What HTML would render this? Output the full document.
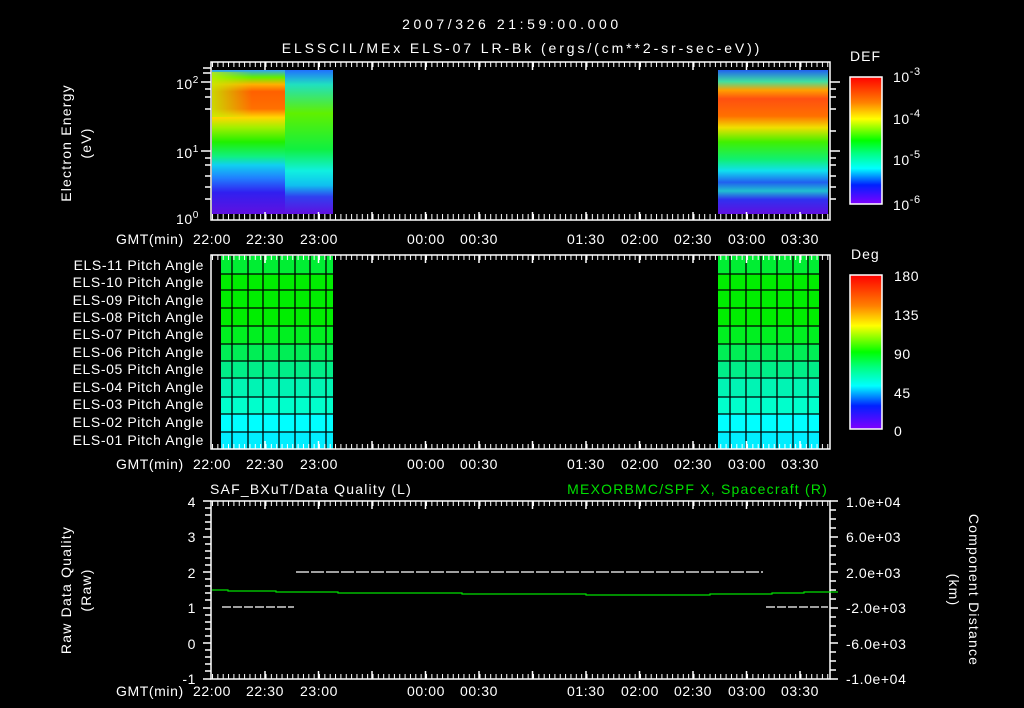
<!DOCTYPE html>
<html><head><meta charset="utf-8"><style>
html,body{margin:0;padding:0;background:#000;width:1024px;height:708px;overflow:hidden}
svg{display:block}
text{font-family:"Liberation Sans",sans-serif;fill:#fff;font-size:14px;letter-spacing:0.6px}
</style></head><body>
<svg width="1024" height="708" viewBox="0 0 1024 708" xmlns="http://www.w3.org/2000/svg">
<defs>
<pattern id="tkT" x="212" y="0" width="5.35" height="708" patternUnits="userSpaceOnUse"><rect x="0" y="0" width="1" height="708" fill="#fff"/></pattern>
<linearGradient id="specL" x1="0" y1="0" x2="0" y2="1">
<stop offset="0" stop-color="#30a0ff"/><stop offset="0.05" stop-color="#60f000"/>
<stop offset="0.1" stop-color="#ffb000"/><stop offset="0.15" stop-color="#ff6000"/><stop offset="0.27" stop-color="#ff7000"/>
<stop offset="0.33" stop-color="#ffd800"/><stop offset="0.4" stop-color="#a0f000"/><stop offset="0.5" stop-color="#20f000"/>
<stop offset="0.6" stop-color="#10f080"/><stop offset="0.66" stop-color="#10d0f0"/><stop offset="0.75" stop-color="#2080ff"/>
<stop offset="0.85" stop-color="#3020f0"/><stop offset="1" stop-color="#6010e0"/></linearGradient>
<linearGradient id="specM" x1="0" y1="0" x2="0" y2="1">
<stop offset="0" stop-color="#2070ff"/><stop offset="0.1" stop-color="#20e0c0"/>
<stop offset="0.3" stop-color="#60f000"/><stop offset="0.55" stop-color="#10f040"/><stop offset="0.7" stop-color="#10f0e0"/>
<stop offset="0.8" stop-color="#10c0f0"/><stop offset="0.88" stop-color="#3040f0"/><stop offset="1" stop-color="#6010e0"/></linearGradient>
<linearGradient id="specR" x1="0" y1="0" x2="0" y2="1">
<stop offset="0" stop-color="#2060f0"/><stop offset="0.08" stop-color="#40e0a0"/>
<stop offset="0.14" stop-color="#ffa000"/><stop offset="0.2" stop-color="#ff5010"/><stop offset="0.32" stop-color="#ff7000"/>
<stop offset="0.4" stop-color="#f0e000"/><stop offset="0.5" stop-color="#40f000"/><stop offset="0.62" stop-color="#10f070"/>
<stop offset="0.7" stop-color="#10e0f0"/><stop offset="0.78" stop-color="#2060f0"/><stop offset="0.84" stop-color="#20c0d0"/>
<stop offset="0.9" stop-color="#3030f0"/><stop offset="1" stop-color="#6010e0"/></linearGradient>
<linearGradient id="fadeL" x1="0" y1="0" x2="1" y2="0">
<stop offset="0" stop-color="#c0f000" stop-opacity="0.8"/><stop offset="1" stop-color="#c0f000" stop-opacity="0"/></linearGradient>
<linearGradient id="cbar" x1="0" y1="0" x2="0" y2="1">
<stop offset="0" stop-color="#ff0000"/><stop offset="0.2" stop-color="#ff8000"/><stop offset="0.33" stop-color="#ffff00"/>
<stop offset="0.5" stop-color="#00ff00"/><stop offset="0.6" stop-color="#00ff80"/><stop offset="0.72" stop-color="#00ffff"/>
<stop offset="0.85" stop-color="#0020ff"/><stop offset="1" stop-color="#8000ff"/></linearGradient>
</defs>

<text x="512" y="29" text-anchor="middle" font-size="18" style="letter-spacing:3.6px">2007/326 21:59:00.000</text>
<text x="522" y="53" text-anchor="middle" font-size="17" style="letter-spacing:2.9px">ELSSCIL/MEx ELS-07 LR-Bk  (ergs/(cm**2-sr-sec-eV))</text>

<!-- Panel 1 -->
<rect x="212" y="70" width="73" height="144" fill="url(#specL)"/>
<rect x="212" y="72" width="40" height="45" fill="url(#fadeL)"/>
<rect x="285" y="70" width="48" height="144" fill="url(#specM)"/>
<rect x="718" y="70" width="110" height="144" fill="url(#specR)"/>
<rect x="211" y="62" width="619" height="158" fill="none" stroke="#fff" stroke-width="1.5"/>
<rect x="212" y="62" width="618" height="5" fill="url(#tkT)"/>
<rect x="212" y="214" width="618" height="6" fill="url(#tkT)"/>
<g stroke="#fff" stroke-width="1.5">
<path d="M265 62v8M318.5 62v8M372 62v8M425.5 62v8M479 62v8M532.5 62v8M586 62v8M639.5 62v8M693 62v8M746.5 62v8M800 62v8"/>
<path d="M265 220v-8M318.5 220v-8M372 220v-8M425.5 220v-8M479 220v-8M532.5 220v-8M586 220v-8M639.5 220v-8M693 220v-8M746.5 220v-8M800 220v-8"/>
<path d="M201 82h10M205 89h6M205 97h6M205 109h6M201 151h10M205 158h6M205 165h6M205 176h6M205 187h6M205 199h6M203 68h8M203 73h8"/>
<path d="M830 82h10M830 89h6M830 97h6M830 109h6M830 131h6M830 151h10M830 158h6M830 165h6M830 176h6M830 187h6M830 199h6"/>
</g>
<text x="176" y="89" font-size="15">10<tspan dy="-6" font-size="10">2</tspan></text>
<text x="176" y="158" font-size="15">10<tspan dy="-6" font-size="10">1</tspan></text>
<text x="176" y="224" font-size="15">10<tspan dy="-6" font-size="10">0</tspan></text>
<text transform="translate(71 143) rotate(-90)" text-anchor="middle" font-size="16" style="letter-spacing:1.2px">Electron Energy</text>
<text transform="translate(91 143) rotate(-90)" text-anchor="middle" font-size="16" style="letter-spacing:1.2px">(eV)</text>
<rect x="850" y="77" width="32" height="127" fill="url(#cbar)" stroke="#fff" stroke-width="1.5"/>
<text x="850" y="61" font-size="17" style="letter-spacing:1px">DEF</text>
<text x="893" y="82" font-size="17">10<tspan dy="-7" font-size="11">-3</tspan></text>
<text x="893" y="124" font-size="17">10<tspan dy="-7" font-size="11">-4</tspan></text>
<text x="893" y="165" font-size="17">10<tspan dy="-7" font-size="11">-5</tspan></text>
<text x="893" y="210" font-size="17">10<tspan dy="-7" font-size="11">-6</tspan></text>

<g id="tl" font-size="15" style="letter-spacing:1px">
<text x="116" y="244">GMT(min)</text>
<text x="212" y="244" text-anchor="middle">22:00</text>
<text x="265" y="244" text-anchor="middle">22:30</text>
<text x="319" y="244" text-anchor="middle">23:00</text>
<text x="426" y="244" text-anchor="middle">00:00</text>
<text x="479" y="244" text-anchor="middle">00:30</text>
<text x="586" y="244" text-anchor="middle">01:30</text>
<text x="640" y="244" text-anchor="middle">02:00</text>
<text x="693" y="244" text-anchor="middle">02:30</text>
<text x="747" y="244" text-anchor="middle">03:00</text>
<text x="800" y="244" text-anchor="middle">03:30</text>
</g>
<use href="#tl" y="225"/>
<use href="#tl" y="452"/>

<!-- Panel 2 -->
<g>
<rect x="221" y="256" width="112" height="18" fill="#00ee33"/><rect x="718" y="256" width="101" height="18" fill="#00ee33"/>
<rect x="221" y="274" width="112" height="52" fill="#00ee00"/><rect x="718" y="274" width="101" height="52" fill="#00ee00"/>
<rect x="221" y="326" width="112" height="18" fill="#00f020"/><rect x="718" y="326" width="101" height="18" fill="#00f020"/>
<rect x="221" y="344" width="112" height="17" fill="#00ee55"/><rect x="718" y="344" width="101" height="17" fill="#00ee55"/>
<rect x="221" y="361" width="112" height="17" fill="#00ee88"/><rect x="718" y="361" width="101" height="17" fill="#00ee88"/>
<rect x="221" y="378" width="112" height="19" fill="#00f4b4"/><rect x="718" y="378" width="101" height="19" fill="#00f4b4"/>
<rect x="221" y="397" width="112" height="17" fill="#00ffcc"/><rect x="718" y="397" width="101" height="17" fill="#00ffcc"/>
<rect x="221" y="414" width="112" height="18" fill="#00ffff"/><rect x="718" y="414" width="101" height="18" fill="#00ffff"/>
<rect x="221" y="432" width="112" height="17" fill="#00eeff"/><rect x="718" y="432" width="101" height="17" fill="#00eeff"/>
</g>
<g stroke="#000" stroke-width="1.3">
<path d="M221 274h112M221 290h112M221 308h112M221 326h112M221 344h112M221 361h112M221 378h112M221 397h112M221 414h112M221 432h112"/>
<path d="M718 274h101M718 290h101M718 308h101M718 326h101M718 344h101M718 361h101M718 378h101M718 397h101M718 414h101M718 432h101"/>
<path d="M232 256v193M248 256v193M263 256v193M279 256v193M295 256v193M310 256v193M326 256v193"/>
<path d="M730 256v193M746 256v193M761 256v193M777 256v193M793 256v193M808 256v193"/>
</g>
<rect x="211" y="255" width="619" height="194" fill="none" stroke="#fff" stroke-width="1.5"/>
<rect x="212" y="255" width="618" height="5" fill="url(#tkT)"/>
<rect x="212" y="444" width="618" height="5" fill="url(#tkT)"/>
<g stroke="#fff" stroke-width="1.5">
<path d="M265 255v8M318.5 255v8M372 255v8M425.5 255v8M479 255v8M532.5 255v8M586 255v8M639.5 255v8M693 255v8M746.5 255v8M800 255v8"/>
<path d="M265 449v-8M318.5 449v-8M372 449v-8M425.5 449v-8M479 449v-8M532.5 449v-8M586 449v-8M639.5 449v-8M693 449v-8M746.5 449v-8M800 449v-8"/>
</g>
<g text-anchor="end" font-size="14" style="letter-spacing:1.4px">
<text x="204" y="270">ELS-11 Pitch Angle</text>
<text x="204" y="287">ELS-10 Pitch Angle</text>
<text x="204" y="305">ELS-09 Pitch Angle</text>
<text x="204" y="322">ELS-08 Pitch Angle</text>
<text x="204" y="339">ELS-07 Pitch Angle</text>
<text x="204" y="357">ELS-06 Pitch Angle</text>
<text x="204" y="374">ELS-05 Pitch Angle</text>
<text x="204" y="392">ELS-04 Pitch Angle</text>
<text x="204" y="409">ELS-03 Pitch Angle</text>
<text x="204" y="427">ELS-02 Pitch Angle</text>
<text x="204" y="445">ELS-01 Pitch Angle</text>
</g>
<rect x="850" y="275" width="32" height="154" fill="url(#cbar)" stroke="#fff" stroke-width="1.5"/>
<text x="851" y="259" font-size="17" style="letter-spacing:1px">Deg</text>
<text x="894" y="281" font-size="17">180</text>
<text x="894" y="320" font-size="17">135</text>
<text x="894" y="359" font-size="17">90</text>
<text x="894" y="398" font-size="17">45</text>
<text x="894" y="436" font-size="17">0</text>

<!-- Panel 3 -->
<text x="210" y="494" font-size="16" style="letter-spacing:1.2px">SAF_BXuT/Data Quality (L)</text>
<text x="828" y="494" font-size="16" text-anchor="end" style="fill:#00e000;letter-spacing:1.2px">MEXORBMC/SPF X, Spacecraft (R)</text>
<rect x="211" y="501" width="619" height="178" fill="none" stroke="#fff" stroke-width="1.5"/>
<rect x="212" y="501" width="618" height="5" fill="url(#tkT)"/>
<rect x="212" y="674" width="618" height="5" fill="url(#tkT)"/>
<g stroke="#fff" stroke-width="1.5">
<path d="M265 501v8M318.5 501v8M372 501v8M425.5 501v8M479 501v8M532.5 501v8M586 501v8M639.5 501v8M693 501v8M746.5 501v8M800 501v8"/>
<path d="M265 679v-8M318.5 679v-8M372 679v-8M425.5 679v-8M479 679v-8M532.5 679v-8M586 679v-8M639.5 679v-8M693 679v-8M746.5 679v-8M800 679v-8"/>
<path d="M203 501h8M203 537h8M203 572h8M203 608h8M203 643h8M203 679h8"/>
<path d="M205 508h6M205 515h6M205 522h6M205 529h6M205 544h6M205 551h6M205 558h6M205 565h6M205 579h6M205 586h6M205 593h6M205 600h6M205 615h6M205 622h6M205 629h6M205 636h6M205 650h6M205 657h6M205 664h6M205 671h6"/>
<path d="M830 501h8M830 537h8M830 572h8M830 608h8M830 643h8M830 679h8"/>
<path d="M830 510h6M830 519h6M830 528h6M830 546h6M830 555h6M830 564h6M830 581h6M830 590h6M830 599h6M830 617h6M830 626h6M830 635h6M830 652h6M830 661h6M830 670h6"/>
</g>
<path d="M222 607h72" stroke="#fff" stroke-width="1.2" stroke-dasharray="9 2"/>
<path d="M296 572h467" stroke="#fff" stroke-width="1.2" stroke-dasharray="13 2"/>
<path d="M766 607h62" stroke="#fff" stroke-width="1.2" stroke-dasharray="9 2"/>
<path d="M212 590h16v1h48v1h62v1h124v1h124v1h124v-1h62v-1h32v-1h34" stroke="#00e000" stroke-width="1.2" fill="none"/>
<g text-anchor="end" font-size="15">
<text x="196" y="507">4</text><text x="196" y="542">3</text><text x="196" y="578">2</text>
<text x="196" y="613">1</text><text x="196" y="649">0</text><text x="196" y="684">-1</text>
</g>
<g font-size="14" style="letter-spacing:1px">
<text x="846" y="507">1.0e+04</text><text x="846" y="542">6.0e+03</text><text x="846" y="578">2.0e+03</text>
<text x="846" y="613">-2.0e+03</text><text x="846" y="649">-6.0e+03</text><text x="846" y="684">-1.0e+04</text>
</g>
<text transform="translate(71 590) rotate(-90)" text-anchor="middle" font-size="16" style="letter-spacing:1.2px">Raw Data Quality</text>
<text transform="translate(91 590) rotate(-90)" text-anchor="middle" font-size="16" style="letter-spacing:1.2px">(Raw)</text>
<text transform="translate(969 590) rotate(90)" text-anchor="middle" font-size="16" style="letter-spacing:1.2px">Component Distance</text>
<text transform="translate(949 590) rotate(90)" text-anchor="middle" font-size="16" style="letter-spacing:1.2px">(km)</text>
</svg>
</body></html>
